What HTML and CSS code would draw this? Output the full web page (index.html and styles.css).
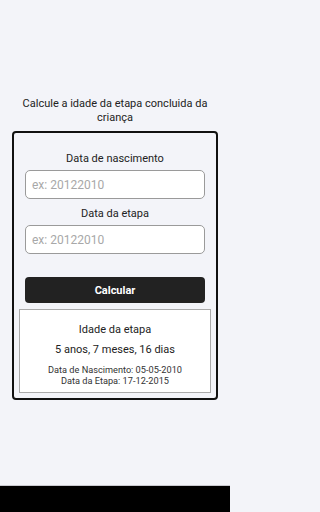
FILE: index.html
```html
<!DOCTYPE html>
<html lang="pt">
<head>
<meta charset="utf-8">
<link rel="stylesheet" href="styles.css">
</head>
<body>
<div class="screen">
  <main class="main">
    <p class="title">Calcule a idade da etapa concluida da criança</p>
    <section class="card">
      <label class="label" for="nasc">Data de nascimento</label>
      <input class="field" id="nasc" type="text" placeholder="ex: 20122010">
      <label class="label label2" for="etapa">Data da etapa</label>
      <input class="field" id="etapa" type="text" placeholder="ex: 20122010">
      <button class="btn" type="button">Calcular</button>
      <div class="result">
        <div class="r-title">Idade da etapa</div>
        <div class="r-age">5 anos, 7 meses, 16 dias</div>
        <div class="r-small">Data de Nascimento: 05-05-2010</div>
        <div class="r-small">Data da Etapa: 17-12-2015</div>
      </div>
    </section>
  </main>
  <div class="navbar"></div>
</div>
</body>
</html>
```
FILE: styles.css
```css
html, body {
  margin: 0;
  padding: 0;
}
body {
  background: #f3f4f9;
  font-family: Roboto, "Liberation Sans", sans-serif;
  color: #1a1a1a;
}
.screen {
  width: 230px;
  height: 512px;
  display: flex;
  flex-direction: column;
}
.main {
  flex: 1;
  display: flex;
  flex-direction: column;
  padding-top: 97px;
}
.title {
  margin: 0 16px;
  font-size: 11px;
  line-height: 14px;
  text-align: center;
  color: #222;
}
.card {
  margin: 6px 12px 0;
  border: 2px solid #111;
  border-radius: 4px;
  padding: 18px 5px 5px;
  display: flex;
  flex-direction: column;
  align-items: stretch;
}
.label {
  display: block;
  text-align: center;
  font-size: 11px;
  line-height: 15px;
  color: #222;
}
.label2 {
  margin-top: 7px;
}
.field {
  margin: 4px 6px 0;
  height: 29px;
  box-sizing: border-box;
  border: 1px solid #9a9a9a;
  border-radius: 5px;
  background: #fff;
  padding: 0 6px;
  font-family: inherit;
  font-size: 12px;
  color: #222;
}
.field::placeholder {
  color: #a8a8a8;
}
.btn {
  margin: 23px 6px 0;
  height: 26px;
  border: none;
  border-radius: 4px;
  background: #222222;
  color: #fff;
  font-family: inherit;
  font-weight: 700;
  font-size: 11px;
}
.result {
  margin-top: 6px;
  border: 1px solid #aaa;
  background: #fff;
  padding: 12px 0 6px;
  text-align: center;
}
.r-title {
  font-size: 11px;
  line-height: 15px;
  color: #222;
}
.r-age {
  margin-top: 5px;
  font-size: 11px;
  line-height: 16px;
  color: #222;
}
.r-small {
  font-size: 9.2px;
  line-height: 11px;
  color: #333;
}
.r-age + .r-small {
  margin-top: 6px;
}
.navbar {
  height: 26px;
  background: #000;
  border-top: 1px solid #c9c9cf;
}
```
